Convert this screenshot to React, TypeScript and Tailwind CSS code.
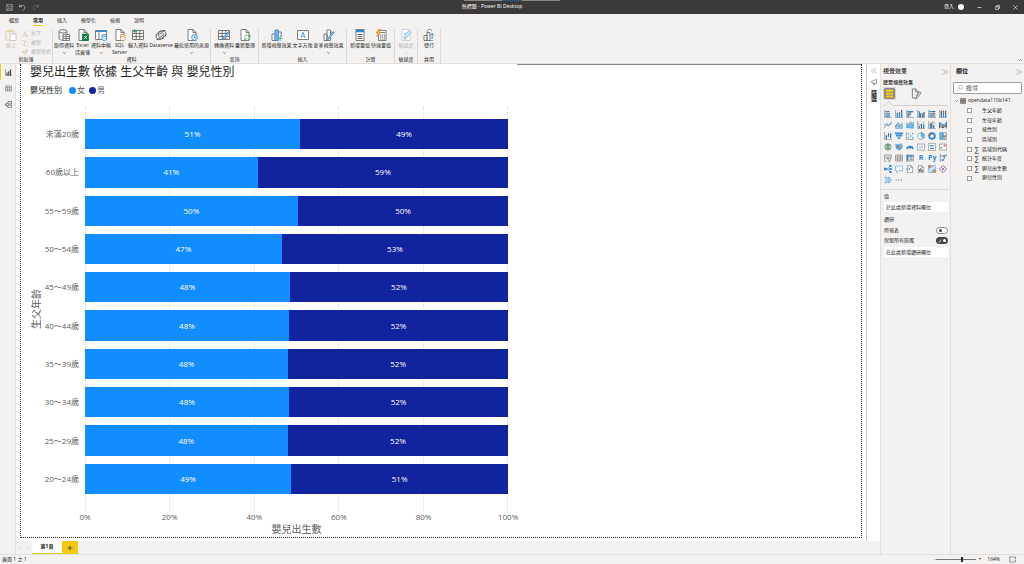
import React from 'react';

const BLUE = '#118dff';
const NAVY = '#12239e';

const rows = [
  { label: '未滿20歲', split: 50.8, female: '51%', male: '49%' },
  { label: '60歲以上', split: 40.8, female: '41%', male: '59%' },
  { label: '55～59歲', split: 50.3, female: '50%', male: '50%' },
  { label: '50～54歲', split: 46.5, female: '47%', male: '53%' },
  { label: '45～49歲', split: 48.4, female: '48%', male: '52%' },
  { label: '40～44歲', split: 48.2, female: '48%', male: '52%' },
  { label: '35～39歲', split: 48, female: '48%', male: '52%' },
  { label: '30～34歲', split: 48.2, female: '48%', male: '52%' },
  { label: '25～29歲', split: 47.9, female: '48%', male: '52%' },
  { label: '20～24歲', split: 48.7, female: '49%', male: '51%' },
];

const ticks = ['0%', '20%', '40%', '60%', '80%', '100%'];

const tabs = ['檔案', '常用', '插入', '模型化', '檢視', '說明'];

const fields = [
  { name: '生父年齡', sum: false },
  { name: '生母年齡', sum: false },
  { name: '按性別', sum: false },
  { name: '區域別', sum: false },
  { name: '區域別代碼', sum: true },
  { name: '統計年度', sum: true },
  { name: '嬰兒出生數', sum: true },
  { name: '嬰兒性別', sum: false },
];

type IconProps = { children: React.ReactNode; className?: string; color?: string };

const Icon = ({ children, className = 'size-3', color = '#605e5c' }: IconProps) => (
  <svg viewBox="0 0 12 12" className={className + ' shrink-0'} fill="none" stroke={color} strokeWidth="0.8" aria-hidden="true">
    {children}
  </svg>
);

const page = <path d="M2 .5h5l3 3v8H2zM7 .5v3h3" fill="#fff" />;
const grid = <path d="M.5 1.5h11v9H.5zM.5 4.5h11M.5 7.5h11M4.2 1.5v9M7.8 1.5v9" />;
const pencil = <path d="M11.3 3.6 6.6 9.5l-1.6.9.3-1.8L10 2.8z" fill="#9fd3f5" stroke="#2b88d8" />;
const cylinder = (
  <g fill="#d5ebfa" stroke="#2b88d8">
    <path d="M7 6.5v4c0 1.3 4.5 1.3 4.5 0v-4" />
    <ellipse cx="9.2" cy="6.4" rx="2.3" ry="1" />
  </g>
);

const icons: Record<string, React.ReactNode> = {
  paste: <><path d="M3.500 2H1v9h4M6.500 2H9v2M3.500 1h3v2h-3z" stroke="#e3c08c" /><path d="M5 5h6v6.500H5z" fill="#fff" stroke="#bbb" /></>,
  getData: <><path d="M1 2.500v7c0 1 2 1.700 4 1.700M9 2.500V5" /><ellipse cx="5" cy="2.300" rx="4" ry="1.700" /><path d="M5 5.500h6.500v6H5zM5 7.500h6.500M5 9.500h6.500M8.200 5.500v6" fill="#fff" /></>,
  excel: <>{page}<path d="M5.500 5h6v6.500h-6z" fill="#107c41" stroke="#107c41" /><path d="m7.200 6.700 2.600 3.200m0-3.200-2.600 3.200" stroke="#fff" /></>,
  hub: <><path d="M.500 1.500h11v9H.500z" fill="#fff" /><path d="M.500 2.200h11" stroke="#2b88d8" strokeWidth="1.500" /><path d="M4 3v7.500" />{cylinder}</>,
  sql: <>{page}<g fill="#fff" stroke="#d8893b"><path d="M6.500 6.500v4c0 1.300 4.500 1.300 4.500 0v-4" /><ellipse cx="8.700" cy="6.400" rx="2.300" ry="1" /></g></>,
  enter: <>{grid}<path d="M2.500 0v5M0 2.500h5" stroke="#2fa160" /></>,
  dataverse: (
    <g strokeWidth="1">
      <path d="M10.500 1.800C6 .700 1 3.800 1 7.200c0 2.200 2.200 3.200 4.500 2.600C8.500 9 9.500 6.500 8.500 4.800 7.500 3.300 4.800 3.800 4.500 6" />
      <path d="M1.500 10.200C6 11.300 11 8.200 11 4.800c0-2.200-2.200-3.200-4.500-2.600C3.500 3 2.500 5.500 3.500 7.200c1 1.500 3.700 1 4-1.200" />
    </g>
  ),
  recent: <>{page}<circle cx="8.500" cy="8.500" r="2.900" fill="#d5ebfa" stroke="#2b88d8" /><path d="M8.500 6.800v1.900h1.400" stroke="#2b88d8" /></>,
  transform: <>{grid}{pencil}</>,
  refresh: <>{page}<path d="M5.500 8.500A2.800 2.800 0 0 1 11 7.800M11 5.800v2H9M11 9.200a2.800 2.800 0 0 1-5 1M5.800 11.800v-2h2" stroke="#4ca866" /></>,
  visual: <><path d="M1 5h3v6.500H1z" fill="#fff" /><path d="M4 1h3.500v10.500H4z" fill="#6cb8ee" stroke="#2b88d8" /><path d="M7.500 3h2.700v5" /><path d="M9.200 7v5M6.700 9.500h5" stroke="#4ca866" /></>,
  textbox: <><path d="M.500 1.500h11v9H.500z" fill="#fff" /><path d="m3.800 9 2.200-5.800L8.200 9M4.600 7.200h2.800" stroke="#2b88d8" /></>,
  more: <><path d="M1 5h3v6.500H1zM4 1h3.500v10.500H4z" fill="#fff" /><path d="M7.500 3h2v2" />{pencil}</>,
  measure: <><path d="M2 .500h8v11H2z" fill="#fff" /><path d="M2 2h8" stroke="#2b88d8" strokeWidth="2.500" /><path d="M3.500 5.500h5M3.500 7.500h5M3.500 9.500h5" strokeWidth="1.200" /></>,
  quick: <><path d="M3.500 1.500H11v10H3.500z" fill="#fff" /><path d="M5 3.500h5" /><path d="M5 6h5M5 8h5M5 10h5" strokeDasharray="1.200 .7" strokeWidth="1.200" /><path d="M4 0 1 4h2L1.500 8 6 3H4l1.500-3z" fill="#f2a33c" stroke="#e08a1c" strokeWidth=".5" /></>,
  sensitivity: <><path d="M2 .500h8v11H2z" stroke="#c8c6c4" fill="#fff" /><path d="m4 8 5-6 2 1.500-5 5.500zM3.500 4.500h3M3.500 10h3" stroke="#a9cfec" strokeWidth="1.400" /></>,
  publish: <><path d="M1 6.500h3v5H1zM4 3.500h3v8H4zM4 3.500c0-4 4-4 5-1.500" fill="#fff" /><path d="M7 11.500h3M9.200 10V4.500M7 6.500l2.200-2.200 2.200 2.200" stroke="#2b88d8" /></>,
};

type Tool = { icon: string; text: string; second?: string; arrow?: boolean; width: string; faded?: boolean };
type Group = { name: string; width: string; tools: Tool[] };

const groups: Group[] = [
  {
    name: '資料',
    width: 'w-[158px]',
    tools: [
      { icon: 'getData', text: '取得資料', arrow: true, width: 'w-[21px]' },
      { icon: 'excel', text: 'Excel', second: '活頁簿', width: 'w-[16px]' },
      { icon: 'hub', text: '資料中樞', arrow: true, width: 'w-[21px]' },
      { icon: 'sql', text: 'SQL', second: 'Server', width: 'w-[16px]' },
      { icon: 'enter', text: '輸入資料', width: 'w-[21px]' },
      { icon: 'dataverse', text: 'Dataverse', width: 'w-[25px]' },
      { icon: 'recent', text: '最近使用的來源', arrow: true, width: 'w-[36px]' },
    ],
  },
  {
    name: '查詢',
    width: 'w-[48px]',
    tools: [
      { icon: 'transform', text: '轉換資料', arrow: true, width: 'w-[21px]' },
      { icon: 'refresh', text: '重新整理', width: 'w-[21px]' },
    ],
  },
  {
    name: '插入',
    width: 'w-[88px]',
    tools: [
      { icon: 'visual', text: '新增視覺效果', width: 'w-[31px]' },
      { icon: 'textbox', text: '文字方塊', width: 'w-[21px]' },
      { icon: 'more', text: '更多視覺效果', arrow: true, width: 'w-[31px]' },
    ],
  },
  {
    name: '計算',
    width: 'w-[48px]',
    tools: [
      { icon: 'measure', text: '新增量值', width: 'w-[21px]' },
      { icon: 'quick', text: '快速量值', width: 'w-[21px]' },
    ],
  },
  { name: '敏感度', width: 'w-[23px]', tools: [{ icon: 'sensitivity', text: '敏感度', arrow: true, width: 'w-[20px]', faded: true }] },
  { name: '共用', width: 'w-[23px]', tools: [{ icon: 'publish', text: '發行', width: 'w-[20px]' }] },
];

const Chevron = () => (
  <svg viewBox="0 0 6 4" className="h-[2px] w-[3px]" fill="none" stroke="currentColor" aria-hidden="true">
    <path d="m.5.5 2.500 2.500L5.500.500" />
  </svg>
);

const ToolButton = ({ tool }: { tool: Tool }) => (
  <button className={`flex flex-col items-center whitespace-nowrap ${tool.width} ${tool.faded ? 'text-[#b5b3b1]' : ''}`}>
    <Icon>{icons[tool.icon]}</Icon>
    <span className="mt-px leading-[7px]">{tool.text}</span>
    <span className="flex h-[7px] items-center leading-[7px]">
      {tool.second}
      {tool.arrow && <Chevron />}
    </span>
  </button>
);

const Ribbon = () => (
  <div className="flex h-[36px] border-b border-[#e1dfdd] bg-[#f3f2f1] pt-px text-[5px] text-[#252423]">
    <div className="flex w-[53px] flex-col items-center border-r border-[#dcdad8]">
      <div className="flex w-full flex-1 gap-1 pl-1 text-[#b5b3b1]">
        <button className="flex w-[14px] flex-col items-center">
          <Icon>{icons.paste}</Icon>
          <span className="mt-px leading-[7px]">貼上</span>
        </button>
        <div className="flex flex-col whitespace-nowrap">
          <button className="flex h-[9px] items-center gap-[3px]">
            <Icon className="size-[6px]" color="#b5b3b1"><path d="m3 0 5 8M9 0 4 8" /><circle cx="3" cy="9.500" r="1.800" /><circle cx="9" cy="9.500" r="1.800" /></Icon>剪下
          </button>
          <button className="flex h-[9px] items-center gap-[3px]">
            <Icon className="size-[6px]" color="#b5b3b1"><path d="M1 1h5v8H1zM5 3h5l1 1v7H5z" fill="#fff" /></Icon>複製
          </button>
          <button className="flex h-[9px] items-center gap-[3px]">
            <Icon className="size-[6px]" color="#d9b892"><path d="m1 6 5 5 2-4-3-3zM6 5l5-4-3 6" strokeWidth="1.500" /></Icon>複製格式
          </button>
        </div>
      </div>
      <span className="leading-[7px]">剪貼簿</span>
    </div>
    {groups.map((g) => (
      <div key={g.name} className={`flex flex-col items-center border-r border-[#dcdad8] ${g.width}`}>
        <div className="flex flex-1 justify-center">
          {g.tools.map((t) => <ToolButton key={t.text} tool={t} />)}
        </div>
        <span className="leading-[7px]">{g.name}</span>
      </div>
    ))}
    <button aria-label="摺疊功能區" className="mt-auto mr-[2px] mb-[2px] ml-auto rotate-180"><Chevron /></button>
  </div>
);

const Chart = () => (
  <section className="ml-[9px] flex w-[58%] flex-col pr-[9px] text-[8px] text-[#605e5c]">
    <h1 className="h-[18px] text-[12px] leading-4 whitespace-nowrap text-[#252423]">嬰兒出生數 依據 生父年齡 與 嬰兒性別</h1>
    <div className="flex h-[16px] items-center text-[#605e5c]">
      <span className="mr-[7px] text-[#252423]">嬰兒性別</span>
      <span className="mr-px size-[7px] rounded-full bg-[#118dff]" />女
      <span className="mr-px ml-1 size-[7px] rounded-full bg-[#12239e]" />男
    </div>
    <div className="mt-[9px] flex flex-1">
      <div className="flex w-3 items-center text-[10px] leading-3">
        <span className="rotate-180 [text-orientation:sideways] [writing-mode:vertical-rl]">生父年齡</span>
      </div>
      <div className="grid w-[43px] auto-rows-fr pt-2 pr-[6px] pb-[13px]">
        {rows.map((r) => (
          <span key={r.label} className="flex items-center justify-end whitespace-nowrap">{r.label}</span>
        ))}
      </div>
      <div className="relative grid flex-1 auto-rows-fr pt-2 pb-[13px]">
        <div className="absolute inset-0 flex justify-between">
          {ticks.map((t) => <span key={t} className="border-l border-dotted border-[#dcdcdc]" />)}
        </div>
        {rows.map((r) => (
          <div key={r.label} className="relative flex py-1 text-white">
            <div className="flex items-center justify-center" style={{ width: `${r.split}%`, background: BLUE }}>{r.female}</div>
            <div className="flex flex-1 items-center justify-center" style={{ background: NAVY }}>{r.male}</div>
          </div>
        ))}
      </div>
    </div>
    <div className="ml-[55px] flex h-[12px] items-center justify-between">
      {ticks.map((t) => <span key={t} className="flex w-0 justify-center">{t}</span>)}
    </div>
    <div className="mb-[2px] ml-[55px] text-center text-[10px] leading-3">嬰兒出生數</div>
  </section>
);

const B = '#2b88d8';
const bars = (a: string, b: string) => <><path d={a} stroke={B} strokeWidth="2" /><path d={b} strokeWidth="1.800" /></>;
const hAxis = <path d="M1 0v11.500h11" />;

const visuals: [string, React.ReactNode][] = [
  ['堆疊橫條圖', <>{hAxis}{bars('M2 2.500h3M2 5.700h5M2 9h7', 'M5 2.500h3M7 5.700h2')}</>],
  ['堆疊直條圖', <>{hAxis}{bars('M3.500 11V7M6.700 11V5M10 11V3', 'M3.500 7V4M6.700 5V3M10 3V0')}</>],
  ['群組橫條圖', <>{hAxis}{bars('M2 2.500h9M2 7h5', 'M2 4.500h6M2 9.200h3')}</>],
  ['群組直條圖', <>{hAxis}{bars('M3.500 11V2M8.500 11V5', 'M5.500 11V5M10.500 11V3')}</>],
  ['100% 堆疊橫條圖', <>{hAxis}{bars('M2 2.500h5M2 5.700h3M2 9h6', 'M7 2.500h4M5 5.700h6M8 9h3')}</>],
  ['100% 堆疊直條圖', <>{hAxis}{bars('M3.500 11V6M6.700 11V4M10 11V7', 'M3.500 6V1M6.700 4V1M10 7V1')}</>],
  ['折線圖', <><path d="M0 10.500 4 6l3 2 5-6" /><path d="m0 7 4-3 3 2 5-5" stroke={B} strokeWidth="1.200" /></>],
  ['區域圖', <><path d="M1 11V7l4-5 3 5 3-2v6z" fill="#9fd3f5" stroke={B} /><path d="m0 9 3-4 3 4 5-7" /></>],
  ['堆疊區域圖', <><path d="M1 10V4l3 3 3-4 4 4V2v9z" fill="#6cb8ee" stroke={B} /><path d="m1 2 3 3 3-4 4 3" /></>],
  ['折線與堆疊直條圖', <>{hAxis}{bars('M3.500 11V7M10 11V5', 'M6.700 11V5')}<path d="m2 4 4 2 5-5" /></>],
  ['折線與群組直條圖', <>{hAxis}{bars('M3.500 11V5M8.500 11V6', 'M5.700 11V3')}<path d="m2 6 4-5 5 3" /></>],
  ['緞帶圖', <><path d="M1 3c5 0 5 5 10 0v3c-5 5-5 0-10 0z" fill="#6cb8ee" stroke={B} /><path d="M1 11V2M6 11V6M11 11V1M1 8l5 2 5-3" strokeWidth="1.500" /></>],
  ['瀑布圖', <>{hAxis}{bars('M3.500 11V5M10 9V2', 'M6.700 7V2')}</>],
  ['漏斗圖', <path d="M0 2h12M1.500 5.500h9M4 9h4" stroke={B} strokeWidth="2.500" />],
  ['散佈圖', <>{hAxis}<g fill={B} stroke="none"><circle cx="4" cy="3" r="1.100" /><circle cx="7" cy="6" r="1.100" /><circle cx="4" cy="8.500" r="1" /><circle cx="10" cy="2.500" r="1.100" /><circle cx="10" cy="8.500" r="1.100" /></g></>],
  ['圓形圖', <><circle cx="6" cy="6" r="5" fill="#fff" /><path d="M6 1a5 5 0 0 1 3.500 8.500L6 6z" fill="#6cb8ee" stroke={B} /></>],
  ['環圈圖', <><circle cx="6" cy="6" r="4.200" stroke={B} strokeWidth="2.800" /><path d="M6 1.800A4.200 4.200 0 0 0 1.800 6" strokeWidth="2.800" stroke="#777" /></>],
  ['矩形式樹狀結構圖', <><path d="M1 1h5v10H1z" fill="#6cb8ee" stroke={B} /><path d="M6 1h5v5H6zM6 6h5v5H6zM8.500 6v5" /></>],
  ['地圖', <><circle cx="6" cy="6" r="4.800" fill="#bcdcc8" /><path d="M2 5c3-4 4 0 7-2M3 9c1-4 4-2 6 0M6 1v10" stroke="#397d5b" strokeWidth="1.200" /></>],
  ['區域分布圖', <><path d="m1 2 4 1 3-2 3 2-1 5-4 3-4-3z" fill="#6cb8ee" stroke={B} /><path d="M5 3v4l5 1M1 5l4 2" /></>],
  ['量測計', <><path d="M1.500 9a4.600 4.600 0 0 1 9 0" stroke={B} strokeWidth="2.500" /><path d="m5.500 9 2-3" strokeWidth="1.500" /></>],
  ['卡片', <><path d="M.500 1.500h11v9H.500z" fill="#fff" /><path d="M3 4.500h2M6 4.500h3M3 7h6" stroke={B} /></>],
  ['多列卡片', <><path d="M1 .500h10v11H1z" fill="#fff" /><path d="M3 4h5M3 8h6" stroke={B} strokeWidth="2" /></>],
  ['KPI', <><path d="M.500 1.500h11v9H.500z" fill="#fff" /><path d="M2 7h3" stroke="#4ca866" strokeWidth="2" /><path d="M7 4h3" stroke="#d65151" strokeWidth="2.500" /></>],
  ['交叉分析篩選器', <><path d="M1 1.500h10v3H1zM1 4.500V11h3M3 7h3" /><path d="M5 6.500h6L8.800 9v3L7.200 11V9z" /></>],
  ['資料表', <>{grid}</>],
  ['矩陣', <><path d="M.500 1.500h11v9H.500z" fill="#fff" /><path d="M1 3h10M2.500 3v7" stroke={B} strokeWidth="2.500" /><path d="M5 6h6M5 8.500h6M7.500 3v7" /></>],
  ['R', null],
  ['Py', null],
  ['關鍵影響因數', <><path d="M2 0v12M2 3h4M2 9h3" /><path d="M5.500 3h4M4.500 9h3M7 6h2" stroke={B} strokeWidth="2" /><path d="m8 2 3-1v3" /></>],
  ['分解樹', <><path d="M0 6h4M4 6l5-4M4 6h5M4 6l5 4" stroke={B} /><path d="M0 4h4v4H0zM8 0h3.500v3H8zM8 4.500h3.500v3H8zM8 9h3.500v3H8z" fill={B} stroke="none" /></>],
  ['問與答', <path d="M.500 1.500h11v7H6l-3 3v-3H.500z" fill="#fff" stroke={B} />],
  ['智慧敘事', <>{page}<path d="M0 6h6M4 4l2 2-2 2" stroke={B} /></>],
  ['編頁報表', <>{page}<path d="M4 10V6M6 10V4M8 10V7" strokeWidth="1.600" /></>],
  ['ArcGIS', <><path d="M1 1h10v10H1z" fill="#9fd3f5" stroke={B} /><path d="M1 10c4 0 1-5 5-5s2-3 5-3" stroke="#fff" strokeWidth="1.500" /><path d="M1 1h3v3H1zM8 8h3v3H8z" fill="#e37b3b" stroke="#e37b3b" /></>],
  ['Power Apps', <path d="M6 .500 11.500 6 6 11.500.500 6zM4 4l4 4M8 4 4 8" stroke="#a34bad" strokeWidth="1.200" />],
  ['Power Automate', <path d="M1 2h3l3 4-3 4H1l3-4zM6 2h2l3 4-3 4H6l3-4z" fill="#d5ebfa" stroke={B} />],
];

const VisualsPane = () => (
  <aside className="flex w-[71px] flex-col border-x border-[#e1dfdd] bg-[#f3f2f1] text-[5px] leading-[7px]">
    <div className="flex h-[15px] items-center justify-between pr-[2px] pl-[2px]">
      <h2 className="text-[6px] font-medium">視覺效果</h2>
      <button aria-label="摺疊視覺效果"><Icon className="size-[6px]"><path d="m1 1 5 5-5 5M6 1l5 5-5 5" /></Icon></button>
    </div>
    <div className="pl-[2px] font-medium">建置視覺效果</div>
    <div className="flex h-[15px] items-center gap-[15px] pl-[2px]">
      <button aria-label="建置視覺效果" className="bg-[#d8d6d4] p-px">
        <Icon className="size-[11px]"><path d="M1 1h10v10H1z" fill="#fff" /><path d="M1 3h10M1 6.200h10M1 9.400h10" stroke="#f2c811" strokeWidth="2.400" /><path d="M1 1h10v10H1zM1 4.600h10M1 7.800h10" /></Icon>
      </button>
      <button aria-label="格式化視覺效果">
        <Icon className="size-[11px]"><path d="M5 11H1.500V1H5l3 3-2.500 6.500L5 12l1.500-.7L11 5.500 9.700 4.200 6 9M5 1v3h3" /></Icon>
      </button>
    </div>
    <svg viewBox="0 0 70 5" className="h-[5px] w-full" fill="none" stroke="#d0cecc" aria-hidden="true"><path d="M2 4.500h2l4-4 4 4h56" /></svg>
    <div className="mt-[2px] grid auto-rows-[11px] grid-cols-6 px-px">
      {visuals.map(([name, art]) => (
        <button key={name} aria-label={name} className="flex items-center justify-center text-[7px] font-bold text-[#2b88d8]">
          {art ? <Icon className="size-2">{art}</Icon> : name}
        </button>
      ))}
      <button aria-label="更多" className="flex items-center justify-center"><Icon className="size-2"><path d="M1 6h10" strokeDasharray="1.500 2.500" strokeWidth="1.500" /></Icon></button>
    </div>
    <div className="mt-1 border-t border-[#dcdad8] pt-[3px] pr-[2px] pl-[3px]">
      <div>值</div>
      <div className="mt-[2px] mb-1 h-[10px] bg-white pl-[2px] leading-[10px] whitespace-nowrap">於此處新增資料欄位</div>
      <div>鑽研</div>
      <label className="mt-[2px] flex h-[10px] items-center justify-between">
        跨報表
        <input type="checkbox" className="relative h-[7px] w-3 appearance-none rounded-full border border-[#8a8886] bg-white before:absolute before:top-px before:left-[2px] before:size-[3px] before:rounded-full before:bg-[#484644]" />
      </label>
      <label className="flex h-[10px] items-center justify-between whitespace-nowrap">
        保留所有篩選
        <span className="relative flex">
          <input type="checkbox" defaultChecked className="h-[7px] w-3 appearance-none rounded-full bg-[#484644] before:mt-[2px] before:ml-[7px] before:block before:size-[3px] before:rounded-full before:bg-white" />
          <svg viewBox="0 0 6 6" className="absolute top-[2px] left-[2px] size-1" fill="none" stroke="#fff" aria-hidden="true"><path d="m1 3 1.500 2L5 1" /></svg>
        </span>
      </label>
      <div className="mt-[2px] h-[10px] bg-white pl-[2px] leading-[10px] whitespace-nowrap">在此處新增鑽研欄位</div>
    </div>
  </aside>
);

const FieldsPane = () => (
  <aside className="w-[73px] bg-[#f3f2f1] px-[2px] text-[5px]">
    <div className="flex h-[15px] items-center justify-between pl-[3px]">
      <h2 className="text-[6px] font-bold">欄位</h2>
      <button aria-label="摺疊欄位"><Icon className="size-[6px]"><path d="m1 1 5 5-5 5M6 1l5 5-5 5" /></Icon></button>
    </div>
    <label className="mt-[3px] flex h-[12px] items-center gap-[3px] rounded-[1px] border border-[#a19f9d] bg-white px-[3px]">
      <Icon className="size-[6px]"><circle cx="7.500" cy="4.500" r="3.800" /><path d="M4.800 7.200.500 11.500" /></Icon>
      <input type="text" placeholder="搜尋" aria-label="搜尋" className="w-full min-w-0 bg-transparent text-[6px] outline-none placeholder:text-[#484644]" />
    </label>
    <div className="mt-[2px] flex h-[10px] items-center gap-[2px] pl-[2px]">
      <Chevron />
      <Icon className="size-[6px]" color="#484644"><path d="M.500 1.500h11v9H.500zM.500 4.500h11M.500 7.500h11M4.200 1.500v9M7.800 1.500v9" strokeWidth="1.400" /></Icon>
      opendata110b141
    </div>
    <div className="grid h-[77px] auto-rows-fr">
      {fields.map((f) => (
        <label key={f.name} className="flex items-center pl-[14px] whitespace-nowrap">
          <input type="checkbox" className="size-[5px] appearance-none border border-[#a19f9d] bg-white" />
          <span className="flex w-[10px] justify-center text-[7px] leading-[7px]">{f.sum && '∑'}</span>
          {f.name}
        </label>
      ))}
    </div>
  </aside>
);

const App = () => {
  return (
    <div className="flex min-h-screen flex-col bg-[#f3f2f1] font-['Open_Sans','Noto_Sans_CJK_TC',sans-serif] text-[#252423]">
      <header className="relative flex h-[14px] items-center bg-[#3b3a39] px-[6px] text-[5px] text-white">
        <div className="absolute top-0 left-1/2 flex h-px w-24 -translate-x-1/2 bg-[#8a8886]"><span className="mx-auto w-5 bg-[#31587c]" /></div>
        <div className="flex flex-1 gap-[6px]">
          <button aria-label="儲存"><Icon className="size-[7px]" color="#d2d0ce"><path d="M1 1h10v10H1zM3 1v4h6V1M3 11V8h6v3" /></Icon></button>
          <button aria-label="復原"><Icon className="size-[7px]" color="#d2d0ce"><path d="M1 1v4h4M1 5c3-4 9-3 9 1 0 2-2 4-4 5.500" strokeWidth="1.200" /></Icon></button>
          <button aria-label="重做"><Icon className="size-[7px]" color="#797775"><path d="M11 1v4H7M11 5C8 1 2 2 2 6c0 2 2 4 4 5.500" strokeWidth="1.200" /></Icon></button>
        </div>
        <span className="mr-10">無標題 - Power BI Desktop</span>
        <div className="flex flex-1 items-center justify-end gap-[13px]">
          <button className="flex items-center gap-1">登入<span className="size-[6px] rounded-full bg-white" /></button>
          <button aria-label="最小化"><Icon className="size-[5px]" color="#fff"><path d="M1 6h10" strokeWidth="1.500" /></Icon></button>
          <button aria-label="還原"><Icon className="size-[5px]" color="#fff"><path d="M1 4h7v7H1zM4 4V1h7v7H8" strokeWidth="1.500" /></Icon></button>
          <button aria-label="關閉"><Icon className="size-[5px]" color="#fff"><path d="m1 1 10 10M11 1 1 11" strokeWidth="1.500" /></Icon></button>
        </div>
      </header>
      <nav className="flex h-[14px] items-start gap-[14px] pl-[9px] text-[5px]">
        {tabs.map((t, i) => (
          <button key={t} className={`h-3 border-b leading-3 ${i === 1 ? 'border-[#f2c811] font-bold' : 'border-transparent'}`}>{t}</button>
        ))}
      </nav>
      <Ribbon />
      <div className="flex flex-1">
        <nav className="flex w-4 flex-col border-r border-[#e1dfdd]">
          <button aria-label="報表" className="flex h-4 items-center border-l border-[#f2c811] pl-1"><Icon className="size-[7px]" color="#484644"><path d="M1 0v11h11" /><path d="M3.500 11V6M6.500 11V4M9.500 11V1" strokeWidth="2" /></Icon></button>
          <button aria-label="資料" className="flex h-4 items-center pl-[5px]"><Icon className="size-[7px]">{grid}</Icon></button>
          <button aria-label="模型" className="flex h-4 items-center pl-[5px]"><Icon className="size-[7px]"><path d="M5 1h6v4H5zM5 7h6v4.500H5zM5 3 1 6l4 3M1 4v4h3" strokeWidth="1.200" /></Icon></button>
        </nav>
        <main className="flex min-w-0 flex-1 flex-col">
          <div className="flex flex-1 bg-white">
            <div className="relative mb-[3px] ml-1 flex flex-1 border-x border-b border-dotted border-[#252423]">
              <div className="absolute top-0 right-0 left-[59%] h-px bg-[#8a8886]" />
              <Chart />
            </div>
            <aside className="ml-1 flex w-[14px] flex-col items-center gap-[5px] border-l border-[#c8c6c4] pt-1">
              <button aria-label="展開篩選"><Icon className="size-[6px]"><path d="M6 1 1 6l5 5M11 1 6 6l5 5" /></Icon></button>
              <Icon className="size-[6px]"><path d="M11 1v9L1 6.500v-2zM4 8l1 3h2V9" strokeWidth="1.200" /></Icon>
              <span className="text-[6px] leading-[6px] font-bold [writing-mode:vertical-rl]">篩選</span>
            </aside>
          </div>
          <div className="flex h-[13px] text-[5px]">
            <div className="flex w-4 items-center justify-around text-[#a19f9d]">
              <button aria-label="上一頁">‹</button>
              <button aria-label="下一頁">›</button>
            </div>
            <button className="w-[30px] border-b border-[#f2c811] bg-white font-bold">第1頁</button>
            <button aria-label="新增頁面" className="flex w-4 items-center justify-center bg-[#f2c811]"><Icon className="size-[6px]" color="#484644"><path d="M6 1v10M1 6h10" strokeWidth="1.800" /></Icon></button>
          </div>
        </main>
        <VisualsPane />
        <FieldsPane />
      </div>
      <footer className="flex h-[10px] items-center border-t border-[#e1dfdd] px-[2px] text-[5px]">
        <span className="flex-1">頁面 1 之 1</span>
        <button aria-label="縮小" className="mr-px">-</button>
        <input type="range" aria-label="縮放" min={0} max={100} defaultValue={65} className="h-[5px] w-10 appearance-none bg-[linear-gradient(#797775,#797775)] bg-[length:100%_1px] bg-center bg-no-repeat [&::-webkit-slider-thumb]:h-[5px] [&::-webkit-slider-thumb]:w-[2px] [&::-webkit-slider-thumb]:appearance-none [&::-webkit-slider-thumb]:bg-[#252423]" />
        <button aria-label="放大" className="mr-[6px] ml-[2px]">+</button>
        <span className="mr-[9px]">164%</span>
        <button aria-label="符合頁面" className="mr-[6px]"><Icon className="size-[7px]"><path d="M1 1.500h10v9H1z" strokeDasharray="4 1" strokeWidth="1.200" /></Icon></button>
      </footer>
    </div>
  );
};

export default App;
